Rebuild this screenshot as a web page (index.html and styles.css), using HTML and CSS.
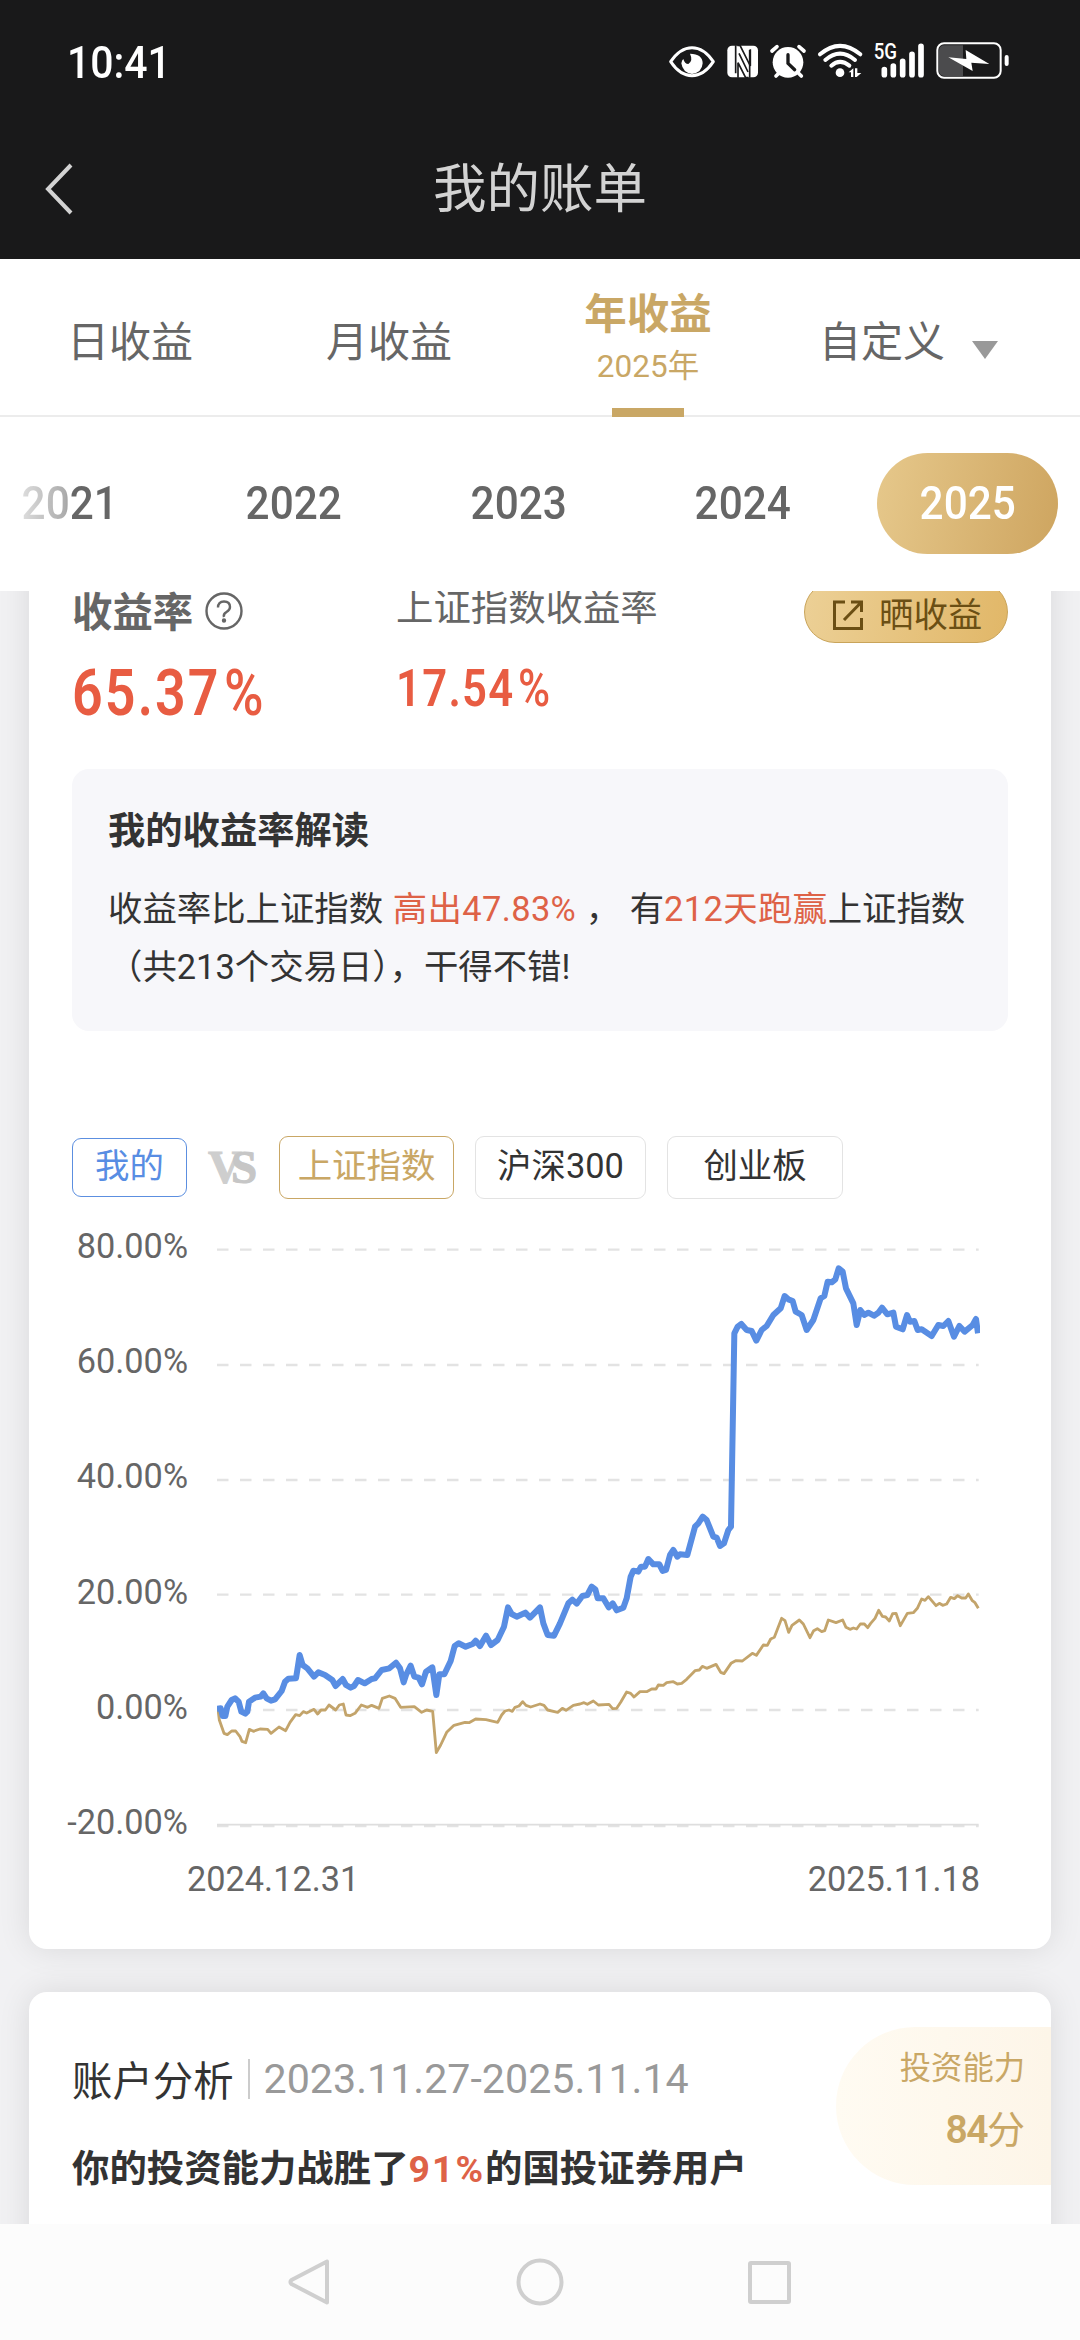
FILE: index.html
```html
<!DOCTYPE html>
<html lang="zh-CN">
<head>
<meta charset="utf-8">
<title>我的账单</title>
<link rel="stylesheet" href="styles.css">
</head>
<body>
<div class="screen">
  <header class="header">
    <div class="status">
      <span class="clock">10:41</span>
      <svg class="status-icons" width="400" height="80" viewBox="0 0 1200 240">
        <g fill="none" stroke="#fff" stroke-linecap="round" stroke-linejoin="round">
          <path stroke-width="9" d="M92 125Q120 83 156 83T220 125Q192 167 156 167T92 125Z"/>
          <path stroke-width="11" d="M396 93l15-13M492 93l-15-13M408 168l9-9M484 168l-9-9"/>
          <path stroke-width="12" d="M540 103Q600 52 661 103M556 120Q600 82 645 120M574 137Q600 114 628 137"/>
          <path stroke-width="17" d="M733 149v15M760 138v26M788 124v40M816 103v61M843 79v85"/>
          <rect x="892" y="70" width="190" height="103" rx="20" stroke-width="6"/>
        </g>
        <path fill="#fff" d="M150 101Q188 102 188 130Q186 158 156 162Q128 158 124 130Q126 120 130 117Q134 132 145 132Q160 122 150 101Z"/>
        <rect x="262" y="77" width="92" height="95" rx="14" fill="#fff"/>
        <path d="M287 76V160M329 90v83" stroke="#19191a" stroke-width="5"/>
        <path d="M292 76h8l31 62v-50M325 173h-8l-23-45v45M297 100l27 56" stroke="#19191a" stroke-width="5" fill="none"/>
        <circle cx="444" cy="127" r="46" fill="#fff"/>
        <path d="M444 104v26l20 19" fill="none" stroke="#19191a" stroke-width="10" stroke-linecap="round"/>
        <circle cx="600" cy="158" r="13" fill="#fff"/>
        <path d="M626 157l14-12v26h-7v-14zM645 145h7v14h12l-14 12h-5z" fill="#fff"/>
        <text class="net" x="701" y="118" textLength="70" lengthAdjust="spacingAndGlyphs">5G</text>
        <path d="M912 76h57v92h-57a15 15 0 0 1-15-15v-62a15 15 0 0 1 15-15z" fill="#4b4b4d"/>
        <path d="M925 112l54 5-2-27 71 42-54-4 4 25z" fill="#fff"/>
        <rect x="1094" y="105" width="12" height="33" rx="6" fill="#fff"/>
      </svg>
    </div>
    <div class="titlebar">
      <svg class="back" width="32" height="54" viewBox="0 0 32 54"><path d="M28 3L5 27l23 24" fill="none" stroke="#d3d3d3" stroke-width="4"/></svg>
      <h1 class="title">我的账单</h1>
    </div>
  </header>

  <nav class="tabs">
    <div class="tab">日收益</div>
    <div class="tab">月收益</div>
    <div class="tab tab-active"><b>年收益</b><small>2025年</small><i class="bar"></i></div>
    <div class="tab tab-custom">自定义<svg width="26" height="18" viewBox="0 0 26 18"><path d="M0 0h26L13 18z" fill="#999"/></svg></div>
  </nav>

  <div class="years">
    <div class="year year-faded"><span>2021</span></div>
    <div class="year"><span>2022</span></div>
    <div class="year"><span>2023</span></div>
    <div class="year"><span>2024</span></div>
    <div class="year year-active"><span>2025</span></div>
  </div>

  <main class="content">
    <section class="card card-yield">
      <div class="summary">
        <div class="mine">
          <div class="mine-label">收益率
            <svg width="38" height="38" viewBox="0 0 38 38" fill="none" stroke="#666" stroke-width="2.4"><circle cx="19" cy="19" r="17.5"/><path d="M13 15.500q0-6 6-6t6 5.500q0 3-3.500 5t-2.500 5"/><circle cx="19" cy="28.500" r="1" fill="#666"/></svg>
          </div>
          <div class="mine-value">65.37<span class="percent">%</span></div>
        </div>
        <div class="index">
          <div class="index-label">上证指数收益率</div>
          <div class="index-value">17.54<span class="percent">%</span></div>
        </div>
        <div class="share">
          <svg width="32" height="32" viewBox="0 0 32 32" fill="none" stroke="#6b4f14" stroke-width="3"><path d="M13 3H2.500v26.500h27V19M19 3h10.500v10M29 3.500L12 21"/></svg>
          晒收益
        </div>
      </div>

      <div class="insight">
        <h2 class="insight-title">我的收益率解读</h2>
        <p class="insight-text">收益率比上证指数 <em>高出47.83%</em> ， 有<em>212天跑赢</em>上证指数<br>（共213个交易日），干得不错!</p>
      </div>

      <div class="chips">
        <span class="chip chip-mine">我的</span>
        <span class="vs"><span class="vs-v">V</span>S</span>
        <span class="chip chip-sse">上证指数</span>
        <span class="chip chip-csi">沪深300</span>
        <span class="chip chip-gem">创业板</span>
      </div>

      <div class="chart">
        <div class="axis-y"><span>80.00%</span><span>60.00%</span><span>40.00%</span><span>20.00%</span><span>0.00%</span><span>-20.00%</span></div>
        <svg class="plot" width="763" height="590" viewBox="51 -960 2289 1770" fill="none">
          <g stroke="#e3e3e3" stroke-width="7" stroke-dasharray="34.500 34.500">
            <path d="M51-931H2336M51-585H2336M51-240H2336M51 104H2336M51 450H2336M51 798H2336"/>
          </g>
          <path stroke="#dedede" stroke-width="5" d="M48 794H2336"/>
          <polyline stroke="#c3a46b" stroke-width="8.5" stroke-linejoin="round" points="53,440 58,480 72,520 82,524 95,513 107,513 120,530 126,544 137,548 148,508 160,514 180,507 203,508 213,520 237,501 257,512 270,487 287,464 299,467 310,455 320,459 342,448 353,462 363,450 376,450 387,435 407,450 418,435 430,432 438,465 450,467 465,460 484,435 503,442 515,436 537,445 547,415 568,408 585,415 602,442 643,440 665,457 680,450 698,454 709,578 722,555 740,517 762,496 795,487 807,488 827,477 858,479 880,484 893,487 905,465 915,453 927,450 937,454 945,442 957,438 968,425 978,436 992,441 1020,432 1032,436 1043,450 1073,457 1087,445 1098,451 1120,436 1140,432 1152,428 1162,433 1180,423 1195,435 1227,433 1238,446 1250,445 1262,427 1280,396 1292,400 1302,411 1320,395 1340,395 1355,387 1368,387 1375,375 1390,376 1400,368 1420,365 1432,372 1445,370 1460,358 1485,332 1498,330 1507,319 1520,325 1548,313 1562,337 1572,341 1593,310 1607,302 1627,303 1657,280 1669,286 1690,255 1702,256 1712,237 1723,232 1745,175 1755,182 1766,217 1776,196 1798,180 1810,192 1830,233 1841,212 1852,206 1865,215 1874,212 1885,180 1908,188 1928,180 1938,202 1950,208 1960,204 1970,207 1981,192 1993,192 2003,203 2012,190 2025,175 2036,151 2047,169 2057,171 2068,183 2078,161 2088,160 2101,197 2122,160 2140,158 2152,145 2165,117 2175,121 2185,110 2208,137 2218,130 2228,136 2240,132 2252,112 2263,116 2273,107 2285,114 2297,114 2305,102 2317,122 2325,128 2335,145"/>
          <polyline stroke="#588de3" stroke-width="18" stroke-linejoin="round" points="51,446 62,445 68,468 76,468 82,440 95,420 105,415 116,425 124,455 136,461 142,455 147,425 165,413 182,410 190,400 200,415 213,422 225,418 245,393 255,365 265,356 288,355 292,330 299,285 308,315 322,325 342,350 355,337 375,345 397,360 407,378 417,368 428,357 438,375 452,383 462,378 474,360 494,370 515,357 525,355 545,330 568,325 588,308 600,325 611,367 618,345 632,317 643,350 656,353 666,373 678,335 697,322 709,405 718,343 733,343 752,303 764,258 776,250 797,260 818,252 827,242 840,258 858,227 873,255 893,240 912,200 924,142 935,162 950,170 976,158 990,173 1020,142 1030,190 1043,225 1062,227 1080,190 1105,130 1117,119 1130,131 1147,108 1162,105 1175,80 1186,88 1193,115 1210,115 1226,142 1238,130 1250,151 1270,143 1280,115 1292,50 1300,32 1315,35 1323,20 1335,20 1345,-3 1360,13 1378,13 1388,33 1398,30 1410,-15 1420,-30 1432,-10 1440,-17 1462,-15 1485,-100 1495,-110 1508,-130 1520,-120 1540,-70 1550,-67 1560,-42 1572,-50 1585,-90 1593,-100 1603,-680 1613,-700 1624,-708 1640,-690 1655,-687 1669,-658 1685,-690 1700,-702 1720,-735 1742,-755 1754,-792 1765,-782 1778,-777 1787,-745 1805,-735 1820,-690 1840,-720 1862,-785 1873,-792 1883,-835 1895,-833 1906,-842 1916,-875 1928,-865 1938,-815 1960,-770 1970,-705 1981,-750 1993,-735 2005,-742 2022,-733 2035,-742 2046,-757 2062,-737 2080,-742 2088,-700 2108,-692 2121,-735 2130,-715 2143,-717 2153,-690 2165,-692 2195,-672 2215,-705 2230,-702 2245,-717 2262,-670 2278,-702 2294,-685 2318,-705 2328,-723 2334,-680"/>
        </svg>
      </div>
      <div class="axis-x"><span>2024.12.31</span><span>2025.11.18</span></div>
    </section>

    <section class="card card-analysis">
      <div class="analysis-main">
        <div class="analysis-head"><span>账户分析</span><i class="divider"></i><time>2023.11.27-2025.11.14</time></div>
        <p class="analysis-text">你的投资能力战胜了<em>91%</em>的国投证券用户</p>
      </div>
      <div class="score"><span>投资能力</span><strong><b>84</b>分</strong></div>
    </section>
  </main>

  <footer class="sysnav">
    <svg width="1080" height="116" viewBox="0 0 1080 116" fill="none" stroke="#cfcfcf" stroke-width="4" stroke-linejoin="round"><path d="M327 37.500v41L291.500 60q-2-2 0-4z"/><circle cx="540" cy="58" r="21.500"/><rect x="750" y="39" width="39" height="39" rx="1"/></svg>
  </footer>
</div>
</body>
</html>
```
FILE: styles.css
```css
* { box-sizing: border-box; margin: 0; padding: 0; }
em, i { font-style: normal; }
body { width: 1080px; background: #fff; }
svg { display: block; flex: none; }

.screen {
  display: flex; flex-direction: column;
  width: 1080px; height: 2340px; overflow: hidden;
  font-family: Roboto, "Noto Sans CJK SC", sans-serif;
  color: #333; white-space: nowrap;
}

.header { height: 259px; flex: none; background: #19191a; }
.status { display: flex; justify-content: space-between; height: 125px; padding: 20px 40px 0 67px; }
.clock { color: #fff; font-size: 45px; font-weight: 500; line-height: 86px; transform: scaleX(.91); transform-origin: left; }
.net { font-size: 64px; font-weight: 500; fill: #fff; }
.titlebar { display: grid; grid-template-columns: 42px 1fr 42px; align-items: center; height: 124px; }
.back { margin-left: 43px; }
.title { padding-top: 3px; text-align: center; color: #d3d3d3; font-size: 53.500px; font-weight: 400; line-height: 124px; }

.tabs { display: flex; flex: none; height: 158px; border-bottom: 2px solid #ececec; }
.tab { width: 259px; padding-left: 1px; text-align: center; font-size: 42px; line-height: 167px; color: #666; }
.tab-active { display: flex; flex-direction: column; align-items: center; color: #c9a765; }
.tab-active b { margin-top: 25px; font-size: 42.500px; font-weight: 700; line-height: 62px; }
.tab-active small { font-size: 31.500px; line-height: 42px; }
.bar { width: 72px; height: 9px; margin-top: 20px; background: #c9a765; flex: none; }
.tab-custom { display: flex; gap: 27px; width: 303px; padding-left: 42px; align-items: flex-start; }
.tab-custom svg { margin-top: 82px; }

.years { display: flex; flex: none; height: 174px; align-items: center; gap: 43.500px; margin-left: -21px; padding-bottom: 1px; }
.year { width: 181px; flex: none; text-align: center; font-size: 45.500px; font-weight: 500; line-height: 101px; color: #666; }
.year span { display: inline-block; transform: scaleX(.93); }
.year-faded span { background: linear-gradient(90deg, #ddd, #aaa 47%, #666 52%); -webkit-background-clip: text; background-clip: text; color: transparent; }
.year-active { border-radius: 51px; background: linear-gradient(100deg, #e6c88b, #cea560); color: #fff; }

.content { flex: none; height: 1633px; overflow: hidden; background: #f1f1f3; padding: 0 29px; }
.card { background: #fff; border-radius: 18px; box-shadow: 0 0 32px rgba(0, 0, 0, .1); }
.card-yield { height: 1398px; margin-top: -40px; padding: 24px 43px 0; }

.summary { display: flex; height: 194px; }
.mine { width: 324px; }
.mine-label { display: flex; align-items: center; gap: 12px; height: 68px; font-size: 40.400px; font-weight: 700; color: #666; }
.mine-label svg { margin-top: 3px; }
.mine-value, .index-value { color: #e85c42; font-weight: 600; transform: scaleX(.84); transform-origin: left; }
.mine-value { margin-top: 13px; font-size: 64px; line-height: 76px; letter-spacing: 2.500px; }
.percent { margin-left: 4px; font-weight: 500; }
.index { flex: 1; }
.index-label { height: 68px; font-size: 37.400px; line-height: 66px; color: #666; }
.index-value { margin-top: 14px; font-size: 52px; line-height: 64px; letter-spacing: 1.500px; }
.share {
  display: flex; align-items: center; gap: 15px;
  width: 204px; height: 62px; margin-top: 6px; padding-left: 27px;
  border: 1px solid #c9a45a; border-radius: 31px;
  background: linear-gradient(100deg, #ecd096, #e1b768);
  color: #6b4f14; font-size: 34.400px;
}
.share svg { margin-top: 5px; }

.insight { height: 262px; padding: 33px 36px; border-radius: 17px; background: #f7f7fa; }
.insight-title { font-size: 37.300px; font-weight: 700; line-height: 58px; }
.insight-text { margin-top: 20px; font-size: 34.400px; line-height: 58px; word-spacing: 1px; }
.insight em { letter-spacing: .4px; }
.insight em, .analysis-text em { color: #de6247; }

.chips { display: flex; align-items: center; margin-top: 105px; height: 63px; font-size: 34.400px; text-align: center; }
.chip { height: 63px; border: 1.500px solid #e3e3e3; border-radius: 9px; line-height: 59px; }
.chip-mine { width: 115px; height: 59px; line-height: 55px; border-color: #5c8fe0; color: #588de3; }
.vs { width: 51px; margin: 0 20px 0 21px; font: 700 47px/59px "Liberation Serif", serif; color: #c6c6c6; text-align: left; -webkit-text-stroke: 1px; }
.vs-v { letter-spacing: -11px; color: #cecece; }
.chip-sse { width: 175px; border-color: #c9a765; color: #c9a765; }
.chip-csi { width: 171px; margin: 0 21px; }
.chip-gem { width: 176px; }

.chart { display: flex; gap: 29px; margin: 41px 0 0 -27px; height: 590px; }
.axis-y { display: flex; flex-direction: column; width: 143px; margin-top: -51px; text-align: right; font-size: 34.300px; line-height: 115.200px; color: #666; }
.axis-x { display: flex; justify-content: space-between; margin: 21px 28px 0 115px; font-size: 34.300px; line-height: 56px; color: #666; }

.card-analysis { display: flex; justify-content: space-between; height: 400px; margin-top: 43px; padding: 35px 0 0 43px; }
.analysis-head { display: flex; align-items: center; height: 103px; font-size: 40.400px; }
.divider { width: 2px; height: 40px; margin: 0 14px 0 14px; background: #ccc; }
.analysis-head time { font-size: 41.200px; color: #999; }
.analysis-text { margin-top: 10px; font-size: 37.400px; font-weight: 700; line-height: 58px; }
.analysis-text em { letter-spacing: 2px; }
.score {
  display: flex; flex-direction: column; align-items: flex-end;
  width: 215px; height: 158px; padding: 15px 26px 0 0; border-radius: 79px 0 0 79px;
  background: linear-gradient(90deg, #fffbf2, #fdf5e8); color: #c9a765;
}
.score span { font-size: 31.300px; line-height: 53px; }
.score strong { font-size: 38px; font-weight: 400; line-height: 70px; }
.score b { font-size: 39px; font-weight: 600; letter-spacing: -1.500px; }

.sysnav { flex: none; height: 116px; background: #fcfcfc; }
```
